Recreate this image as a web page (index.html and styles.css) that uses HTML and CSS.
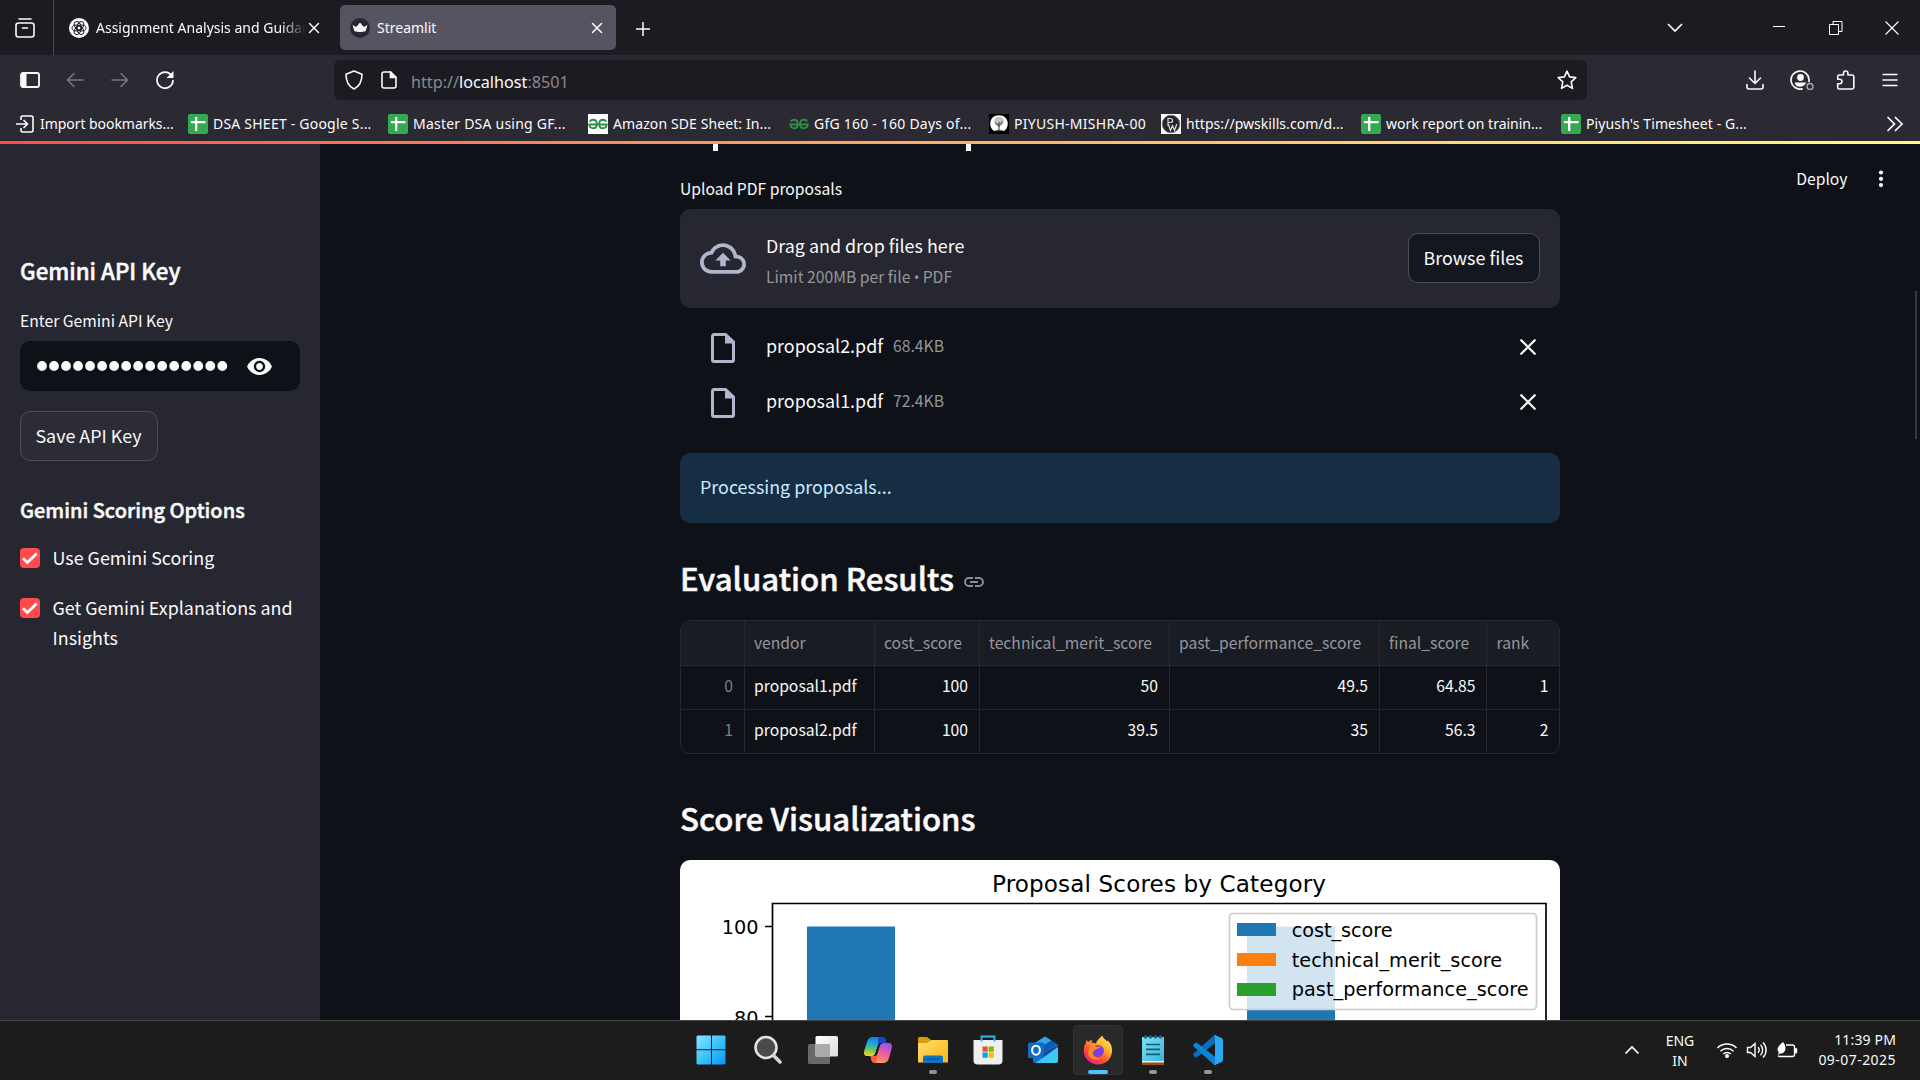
FILE: index.html
```html
<!DOCTYPE html>
<html lang="en">
<head>
<meta charset="utf-8">
<title>Streamlit</title>
<link rel="stylesheet" href="styles.css">
</head>
<body>
<svg width="0" height="0" class="defs">
  <defs>
    <symbol id="sheet" viewBox="0 0 20 20"><rect width="20" height="20" rx="2" fill="#34a853"/><path d="M8.2 3v14M3 8.2h14.500" stroke="#fff" stroke-width="2.300"/></symbol>
    <symbol id="gfg" viewBox="0 0 20 20"><path d="M2 7.800C2.400 6.300 3.600 5.700 5 5.700c2.400 0 3.800 1.700 3.800 4.200S7.400 14.300 5.200 14.300C3.200 14.300 1.600 13 1.300 10.500H18.700C18.400 13 16.800 14.300 14.800 14.300c-2.200 0-3.600-1.900-3.600-4.400s1.400-4.200 3.800-4.200c1.400 0 2.600.6 3 2.100" fill="none" stroke="#2f8d46" stroke-width="1.900"/></symbol>
    <symbol id="x" viewBox="0 0 12 12"><path d="M1.500 1.500l9 9M10.500 1.500l-9 9" fill="none" stroke="currentColor" stroke-width="1.500" stroke-linecap="round"/></symbol>
    <symbol id="file" viewBox="0 0 24 30"><path d="M14.500 1.500H3A1.500 1.500 0 0 0 1.500 3v24A1.500 1.500 0 0 0 3 28.500h18a1.500 1.500 0 0 0 1.500-1.500V9z" fill="none" stroke="#b2b5cb" stroke-width="3"/><path d="M14 1v9.500h9V9.300L15.300 1z" fill="#b2b5cb"/></symbol>
    <symbol id="check" viewBox="0 0 20 20"><rect width="20" height="20" rx="4" fill="#ff4b4b"/><path d="M3 10.200l4.300 4.300L16.800 5.500" fill="none" stroke="#fafafa" stroke-width="2.700"/></symbol>
  </defs>
</svg>

<header class="browser">
  <div class="tabs">
    <div class="view"><svg width="20" height="20" viewBox="0 0 20 20" fill="none" stroke="#fbfbfe" stroke-width="1.600"><path d="M4 1h12" stroke-linecap="round"/><rect x="1" y="5" width="18" height="14" rx="2.500"/><path d="M7.500 10h5" stroke-linecap="round"/></svg></div>
    <div class="tab">
      <svg width="20" height="20" viewBox="0 0 20 20"><circle cx="10" cy="10" r="10" fill="#fff"/><g fill="none" stroke="#222" stroke-width="1"><ellipse cx="10" cy="7.500" rx="3" ry="4.500" transform="rotate(30 10 10)"/><ellipse cx="10" cy="7.500" rx="3" ry="4.500" transform="rotate(90 10 10)"/><ellipse cx="10" cy="7.500" rx="3" ry="4.500" transform="rotate(150 10 10)"/><ellipse cx="10" cy="7.500" rx="3" ry="4.500" transform="rotate(210 10 10)"/><ellipse cx="10" cy="7.500" rx="3" ry="4.500" transform="rotate(270 10 10)"/><ellipse cx="10" cy="7.500" rx="3" ry="4.500" transform="rotate(330 10 10)"/></g></svg>
      <span class="tab-title fade">Assignment Analysis and Guidance</span>
      <svg class="tab-x" width="12" height="12"><use href="#x"/></svg>
    </div>
    <div class="tab active">
      <svg width="20" height="20" viewBox="0 0 20 20"><circle cx="10" cy="10" r="10" fill="#262730"/><path d="M2.500 7l3.700 2L10 4.500 13.800 9l3.700-2-2 6.200c-3 1.100-8 1.100-11 0z" fill="#f4f4f4"/></svg>
      <span class="tab-title">Streamlit</span>
      <svg class="tab-x" width="12" height="12"><use href="#x"/></svg>
    </div>
    <svg class="plus" width="16" height="16" viewBox="0 0 16 16" stroke="#fbfbfe" stroke-width="1.500"><path d="M8 1v14M1 8h14"/></svg>
    <div class="window-buttons">
      <svg width="16" height="16" viewBox="0 0 16 16" fill="none" stroke="#fbfbfe" stroke-width="1.600"><path d="M1 4l7 7 7-7"/></svg>
      <svg class="minimise" width="14" height="14" viewBox="0 0 14 14" stroke="#fff"><path d="M1 5.500h12"/></svg>
      <svg class="restore" width="14" height="14" viewBox="0 0 14 14" fill="none" stroke="#fff"><path d="M.5 3.500h9v10h-9zM4 3.500v-3h9v10H9.500"/></svg>
      <svg class="close" width="14" height="14" viewBox="0 0 14 14" stroke="#fff" stroke-width="1.100"><path d="M.5.5l13 13M13.500.5l-13 13"/></svg>
    </div>
  </div>

  <div class="toolbar">
    <div class="nav">
      <svg width="20" height="16" viewBox="0 0 20 16"><rect x="1" y="1" width="18" height="14" rx="2" fill="none" stroke="#fbfbfe" stroke-width="1.800"/><path d="M2 2h4.500v12H2z" fill="#fbfbfe"/></svg>
      <svg width="18" height="18" viewBox="0 0 18 18" fill="none" stroke="#77767e" stroke-width="1.600" stroke-linecap="round" stroke-linejoin="round"><path d="M17 9H1.500M8 2.500L1.500 9 8 15.500"/></svg>
      <svg width="18" height="18" viewBox="0 0 18 18" fill="none" stroke="#77767e" stroke-width="1.600" stroke-linecap="round" stroke-linejoin="round"><path d="M1 9h15.500M10 2.500L16.500 9 10 15.500"/></svg>
      <svg width="20" height="20" viewBox="0 0 20 20"><path d="M16.500 5.500A8 8 0 1 0 18 10.500" fill="none" stroke="#fbfbfe" stroke-width="1.700" stroke-linecap="round"/><path d="M18.500 1v7h-7z" fill="#fbfbfe"/></svg>
    </div>
    <div class="url">
      <svg width="18" height="20" viewBox="0 0 18 20" fill="none" stroke="#fbfbfe" stroke-width="1.600" stroke-linejoin="round"><path d="M9 1l8 3.200c0 7-2 11.800-8 14.800C3 16 1 11.200 1 4.200z"/></svg>
      <svg width="16" height="18" viewBox="0 0 16 18" fill="none" stroke="#fbfbfe" stroke-width="1.600"><path d="M9.500 1H3a2 2 0 0 0-2 2v12a2 2 0 0 0 2 2h10a2 2 0 0 0 2-2V6.500z"/><path d="M9.500 1v5.500H15z" fill="#fbfbfe"/></svg>
      <span class="address">http://<b>localhost</b>:8501</span>
      <svg width="20" height="20" viewBox="0 0 20 20" fill="none" stroke="#fbfbfe" stroke-width="1.600" stroke-linejoin="round"><path d="M10 1.200l2.600 5.700 6.200.7-4.600 4.200 1.300 6.600L10 15.200l-5.500 3.200 1.300-6.600L1.200 7.600l6.200-.7z"/></svg>
    </div>
    <div class="tools">
      <svg width="18" height="20" viewBox="0 0 18 20" fill="none" stroke="#fbfbfe" stroke-width="1.600" stroke-linecap="round" stroke-linejoin="round"><path d="M9 1v12M3.500 8L9 13.500 14.500 8M1 14.500V17a2 2 0 0 0 2 2h12a2 2 0 0 0 2-2v-2.500"/></svg>
      <svg width="24" height="20" viewBox="0 0 24 20"><path d="M12 18.800A9 9 0 1 1 19 9.500v2" fill="none" stroke="#fbfbfe" stroke-width="1.700" stroke-linecap="round"/><circle cx="10.500" cy="7.500" r="3.400" fill="#fbfbfe"/><path d="M4.500 12.500h12l-2.500 3q-4 2.500-8 0z" fill="#fbfbfe"/><circle cx="20" cy="16.500" r="3" fill="none" stroke="#aaa9b0" stroke-width="1.400"/></svg>
      <svg width="20" height="20" viewBox="0 0 20 20" fill="none" stroke="#fbfbfe" stroke-width="1.600" stroke-linejoin="round"><path d="M7.500 5V3.200a2.200 2.200 0 0 1 4.400 0V5H16a1.800 1.800 0 0 1 1.800 1.800V17.200A1.800 1.800 0 0 1 16 19H3.300a1.600 1.600 0 0 1-1.600-1.600v-3.600h2a2.200 2.200 0 0 0 0-4.500h-2V6.600A1.600 1.600 0 0 1 3.300 5z"/></svg>
      <svg width="16" height="14" viewBox="0 0 16 14" stroke="#fbfbfe" stroke-width="1.400"><path d="M.5 1.500h15M.5 7h15M.5 12.500h15"/></svg>
    </div>
  </div>

  <div class="bookmarks">
    <div class="bm w1"><svg width="20" height="20" viewBox="0 0 20 20" fill="none" stroke="#fbfbfe" stroke-width="1.600"><path d="M6 6V3.500A1.500 1.500 0 0 1 7.500 2h9A1.500 1.500 0 0 1 18 3.500v13a1.500 1.500 0 0 1-1.500 1.500h-9A1.500 1.500 0 0 1 6 16.500V14M1 10h11.500M8.500 6l4 4-4 4"/></svg>Import bookmarks...</div>
    <div class="bm w2"><svg width="20" height="20"><use href="#sheet"/></svg>DSA SHEET - Google S...</div>
    <div class="bm w3"><svg width="20" height="20"><use href="#sheet"/></svg>Master DSA using GF...</div>
    <div class="bm w4"><svg class="white" width="20" height="20"><use href="#gfg"/></svg>Amazon SDE Sheet: In...</div>
    <div class="bm w5"><svg width="20" height="20"><use href="#gfg"/></svg>GfG 160 - 160 Days of...</div>
    <div class="bm w6"><svg width="20" height="20" viewBox="0 0 20 20"><path d="M0 0h20v20H0z"/><path d="M10 1.300c5 0 8.800 3.500 8.800 8.200 0 4-2.300 6.500-3.800 7.500-2.500-1-7.500-1-10 0-1.500-1-3.800-3.500-3.800-7.500C1.200 4.800 5 1.300 10 1.300z" fill="#fff"/><circle cx="10" cy="7.500" r="4.800" fill="#aaa" opacity=".7"/><path d="M10 17.500V8M10 12.500L6.500 8.500M10 11.500l3.500-4M8 17h4" stroke="#333" stroke-width="1"/></svg>PIYUSH-MISHRA-00</div>
    <div class="bm w7"><svg width="20" height="20" viewBox="0 0 20 20"><path d="M0 0h20v20H0z" fill="#fff"/><circle cx="10" cy="10" r="8.800" fill="#23272b" stroke="#777" stroke-width="1"/><path d="M7 12V4.500h2.500a2 2 0 0 1 0 4H7M7.500 10.500l2 6 2-5 2 5 2.300-6.500" fill="none" stroke="#ddd" stroke-width="1.200"/></svg>https://pwskills.com/d...</div>
    <div class="bm w8"><svg width="20" height="20"><use href="#sheet"/></svg>work report on trainin...</div>
    <div class="bm w9"><svg width="20" height="20"><use href="#sheet"/></svg>Piyush's Timesheet - G...</div>
    <svg class="more" width="18" height="16" viewBox="0 0 18 16" fill="none" stroke="#fbfbfe" stroke-width="1.700"><path d="M1.500 1l7 7-7 7M9 1l7 7-7 7"/></svg>
  </div>
</header>
<div class="rainbow"></div>

<div class="app">
  <aside class="side">
    <h2>Gemini API Key</h2>
    <label class="small">Enter Gemini API Key</label>
    <div class="secret">
      <svg width="196" height="12" viewBox="0 0 196 12"><path d="M6 6h181" stroke="#fafafa" stroke-width="9.800" stroke-linecap="round" stroke-dasharray="0 12.020"/></svg>
      <svg width="25" height="17" viewBox="1 4.500 22 15" fill="#fafafa"><path d="M12 4.500C7 4.500 2.730 7.610 1 12c1.730 4.390 6 7.500 11 7.500s9.270-3.110 11-7.500c-1.730-4.390-6-7.500-11-7.500zM12 17c-2.760 0-5-2.240-5-5s2.240-5 5-5 5 2.240 5 5-2.240 5-5 5zm0-8c-1.660 0-3 1.340-3 3s1.340 3 3 3 3-1.340 3-3-1.340-3-3-3z"/></svg>
    </div>
    <button class="btn save">Save API Key</button>
    <h3>Gemini Scoring Options</h3>
    <div class="option"><svg width="20" height="20"><use href="#check"/></svg><span>Use Gemini Scoring</span></div>
    <div class="option"><svg width="20" height="20"><use href="#check"/></svg><span>Get Gemini Explanations and Insights</span></div>
  </aside>

  <main class="main">
    <section class="column">
      <div class="title-tail"><i></i><i></i></div>
      <label class="small upload-label">Upload PDF proposals</label>
      <div class="dropzone">
        <svg width="46" height="31" viewBox="0 4 24 16" fill="#b2b5cb"><path d="M19.350 10.040C18.670 6.590 15.640 4 12 4 9.110 4 6.600 5.640 5.350 8.040 2.340 8.360 0 10.910 0 14c0 3.310 2.690 6 6 6h13c2.760 0 5-2.240 5-5 0-2.640-2.050-4.780-4.650-4.960zM19 18H6c-2.210 0-4-1.790-4-4 0-2.050 1.530-3.760 3.560-3.970l1.070-.11.5-.95C8.080 7.140 9.940 6 12 6c2.620 0 4.880 1.860 5.390 4.430l.3 1.500 1.530.11c1.560.1 2.780 1.410 2.780 2.960 0 1.650-1.350 3-3 3zM8 13h2.550v3h2.900v-3H16l-4-4z"/></svg>
        <div class="drop-text"><span>Drag and drop files here</span><span class="small muted">Limit 200MB per file <b>•</b> PDF</span></div>
        <button class="btn browse">Browse files</button>
      </div>
      <div class="files">
        <div class="file"><svg width="24" height="30"><use href="#file"/></svg><span class="name">proposal2.pdf</span><span class="small muted">68.4KB</span><svg class="remove" width="18" height="18"><use href="#x"/></svg></div>
        <div class="file"><svg width="24" height="30"><use href="#file"/></svg><span class="name">proposal1.pdf</span><span class="small muted">72.4KB</span><svg class="remove" width="18" height="18"><use href="#x"/></svg></div>
      </div>
      <div class="info">Processing proposals...</div>
      <h1>Evaluation Results <svg width="20" height="10" viewBox="0 0 20 10" fill="none" stroke="#8b8d92" stroke-width="1.900"><path d="M9 1H5a4 4 0 0 0 0 8h4M11 1h4a4 4 0 0 1 0 8h-4M6 5h8"/></svg></h1>
      <div class="grid">
        <div class="row head"><span></span><span>vendor</span><span>cost_score</span><span>technical_merit_score</span><span>past_performance_score</span><span>final_score</span><span>rank</span></div>
        <div class="row"><span>0</span><span>proposal1.pdf</span><span>100</span><span>50</span><span>49.5</span><span>64.85</span><span>1</span></div>
        <div class="row"><span>1</span><span>proposal2.pdf</span><span>100</span><span>39.5</span><span>35</span><span>56.3</span><span>2</span></div>
      </div>
      <h1 class="second">Score Visualizations</h1>
      <svg class="chart" width="880" height="660" viewBox="0 0 880 660">
        <rect width="880" height="660" fill="#fff"/>
        <path d="M127 66.500h88V600h-88zM567 66.500h88V600h-88z" fill="#1f77b4"/>
        <path d="M92.500 600V43.500h773.500V600M85 66.500h7.500M85 156.500h7.500" fill="none" stroke="#000" stroke-width="1.700"/>
        <text class="title" x="479" y="32" text-anchor="middle" textLength="334">Proposal Scores by Category</text>
        <text x="78.500" y="74" text-anchor="end">100</text>
        <text x="78.500" y="164.500" text-anchor="end">80</text>
        <rect x="549.500" y="53.500" width="307" height="96" rx="4" fill="#fff" fill-opacity=".8" stroke="#ccc" stroke-width="1.700"/>
        <path d="M557 63h39v13h-39z" fill="#1f77b4"/><path d="M557 93h39v13h-39z" fill="#ff7f0e"/><path d="M557 123h39v13h-39z" fill="#2ca02c"/>
        <text x="611.700" y="76.500" textLength="101">cost_score</text>
        <text x="611.700" y="106.500" textLength="210.500">technical_merit_score</text>
        <text x="611.700" y="136" textLength="237">past_performance_score</text>
      </svg>
    </section>
    <div class="deploy">Deploy<svg width="6" height="18" viewBox="0 0 6 18" fill="#fafafa"><circle cx="3" cy="2.500" r="2.100"/><circle cx="3" cy="8.800" r="2.100"/><circle cx="3" cy="15.100" r="2.100"/></svg></div>
    <div class="scrollbar"></div>
  </main>
</div>

<footer class="taskbar">
  <div class="icons">
    <div class="slot start"><svg width="30" height="30" viewBox="0 0 30 30"><defs><linearGradient id="win" x2="1" y2="1"><stop stop-color="#8ae4ff"/><stop offset=".5" stop-color="#3cc4fb"/><stop offset="1" stop-color="#0a93f6"/></linearGradient></defs><path d="M1.500.5H15v13.800H.5V1.500zM16 .5h12.500l1 1v12.800H16zM.5 15.300H15v14.200H1.500l-1-1zM16 15.300h13.500v13.200l-1 1H16z" fill="url(#win)"/></svg></div>
    <div class="slot"><svg width="30" height="30" viewBox="0 0 30 30"><circle cx="13" cy="12.500" r="10.500" fill="#4a4a4a" stroke="#e3e3e3" stroke-width="2.600"/><path d="M20.500 20.500l6.500 6.500" stroke="#d5d5d5" stroke-width="3.600" stroke-linecap="round"/></svg></div>
    <div class="slot"><svg width="30" height="30" viewBox="0 0 30 30"><defs><linearGradient id="tv" x2="1" y2="1"><stop stop-color="#fff"/><stop offset="1" stop-color="#dcdcdc"/></linearGradient></defs><rect y="9" width="22" height="20" rx="1.500" fill="#696969"/><rect x="7.500" y="1" width="22.500" height="20.500" rx="1.500" fill="url(#tv)"/><path d="M7.500 9H22v12.500H8.500l-1-1z" fill="#aaa"/></svg></div>
    <div class="slot"><svg width="30" height="30" viewBox="0 0 30 30"><defs><linearGradient id="cpa" x1=".5" x2=".3" y2="1"><stop stop-color="#1b73e8"/><stop offset=".35" stop-color="#16a7dc"/><stop offset=".65" stop-color="#5ec46b"/><stop offset="1" stop-color="#f5cf22"/></linearGradient><linearGradient id="cpb" x1=".7" x2=".3" y2="1"><stop stop-color="#9b50e8"/><stop offset=".5" stop-color="#ef5f9b"/><stop offset="1" stop-color="#ff9d54"/></linearGradient></defs><path d="M6.500 3C7.500 2.200 8.500 2 10 2h9c2 0 3 1.500 3.500 3l.8 3H18c-2 0-2.800 1-3.300 2.800l-2.200 7C12 19.800 10.800 21 9 21H4.500C1.500 21 .5 19 1.200 16L4 7c.6-2 1.200-3.200 2.500-4z" fill="url(#cpa)"/><path d="M15.500 2H19c2 0 3 1.500 3.500 3l.8 3H18c-1.500 0-2.500.7-3 2z" fill="#1745cf"/><path d="M23.500 27c-1 .8-2 1-3.500 1h-8c-2 0-3-1.500-3.500-3L7.500 21H11c2 0 3-1.200 3.500-3l2.200-7C17.300 9 18.500 8 20.500 8h5c3 0 4 2 3.300 5L26 23c-.6 2-1.200 3.200-2.500 4z" fill="url(#cpb)"/><path d="M7.500 21H11c1.800 0 2.800-1 3.400-2.600L13 28h-1c-2 0-3-1.500-3.500-3z" fill="#f2603d"/><path d="M15 10.500c.5-1.500 1.200-2.500 3-2.500h1.500c-1.500.5-2.300 1.400-2.800 3L14 19.500c-.5 1-1.300 1.500-3 1.500.8-.7 1.200-1.500 1.500-2.800z" fill="#1c1c1c"/></svg></div>
    <div class="slot"><svg width="30" height="30" viewBox="0 0 30 30"><defs><linearGradient id="fo" x2="1" y2="1"><stop stop-color="#ffdc70"/><stop offset="1" stop-color="#fbb80d"/></linearGradient></defs><path d="M0 3.500A1.500 1.500 0 0 1 1.500 2H9l4 3-3 4H0z" fill="#dc9a0a"/><path d="M0 8h8.500c2 0 3-3 5-3H29a1 1 0 0 1 1 1v21.500H0z" fill="url(#fo)"/><path d="M5 28v-5.500a2 2 0 0 1 2-2h16a2 2 0 0 1 2 2V28z" fill="#1173c5"/><path d="M8.500 24h13" stroke="#0b4f94" stroke-width="1.200"/></svg><i></i></div>
    <div class="slot"><svg width="30" height="30" viewBox="0 0 30 30"><path d="M.5 5h29v20.500c0 2.500-1.500 4-4 4h-21c-2.500 0-4-1.500-4-4z" fill="#efefef"/><path d="M8.500 6.500v-5h13v5" fill="none" stroke="#2bb5ee" stroke-width="1.900"/><path d="M9.500 11.500h5.200v5.200H9.500z" fill="#f25022"/><path d="M15.600 11.500h5.200v5.200h-5.200z" fill="#7fba00"/><path d="M9.500 17.500h5.200v5.200H9.500z" fill="#00a4ef"/><path d="M15.600 17.500h5.200v5.200h-5.200z" fill="#ffb900"/></svg></div>
    <div class="slot"><svg width="30" height="30" viewBox="0 0 30 30"><path d="M5 10L17 1.500 30 10v15.500a2.500 2.500 0 0 1-2.500 2.500H7.500A2.500 2.500 0 0 1 5 25.500z" fill="#1274d0"/><path d="M5 9L17 1.500l6.500 4L9 14z" fill="#31a5ea"/><path d="M23.500 5.500L29 9 13 19V12z" fill="#0e59b2"/><path d="M30 10v6L17 24l-4-5z" fill="#124a9d"/><path d="M30 12v13.500a2.500 2.500 0 0 1-2.500 2.500H7.500z" fill="#3cc8f2"/><rect y="7.500" width="16" height="15.500" rx="1.500" fill="#0f6cca"/><ellipse cx="8" cy="15.200" rx="3.900" ry="4.500" fill="none" stroke="#fff" stroke-width="2.100"/></svg></div>
    <div class="slot current"><svg width="30" height="30" viewBox="0 0 30 30"><defs><linearGradient id="ff" x1=".9" x2=".2" y2="1"><stop stop-color="#fff04d"/><stop offset=".35" stop-color="#ffb62d"/><stop offset=".65" stop-color="#ff5634"/><stop offset="1" stop-color="#f01786"/></linearGradient></defs><path d="M19 .5c1 2.500 3.500 4 5 6l.5-1.200C28 8.500 29.500 12 29 17c-.8 7.500-6.500 12.500-14 12.500S1 24 .8 16C.7 12.500 1.600 9.500 3 7.500l.5-2.500 2 2C7 5.500 8 5.300 9 5l-.5 3c1.500-.5 3-.2 4.500.8C13.500 5 16.500 4 19 .5z" fill="url(#ff)"/><circle cx="15" cy="16" r="6" fill="#7a3fe0"/><path d="M7 11c3-1 5-.5 7 1l4-1c-2 3-5 3-7 4.500C8 18 10 24 18 23c-6 3.500-13 .5-13-5.500z" fill="#ff8a24"/></svg><i></i></div>
    <div class="slot"><svg width="30" height="30" viewBox="0 0 30 30"><defs><linearGradient id="np" y2="1" x2="1"><stop stop-color="#7fe0f5"/><stop offset="1" stop-color="#3fb2d4"/></linearGradient></defs><path d="M4 27h22v3H4z" fill="#9a4f15"/><path d="M4 25h22v2.500H4z" fill="#eee"/><path d="M4 2h22v24H4z" fill="url(#np)"/><path d="M8 9.500h14M8 14.300h14M8 19.300h14" stroke="#0c5d80" stroke-width="1.700"/><g fill="#0f6d94"><circle cx="7.500" cy="2" r="1.700"/><circle cx="12.500" cy="2" r="1.700"/><circle cx="17.500" cy="2" r="1.700"/><circle cx="22.500" cy="2" r="1.700"/></g></svg><i></i></div>
    <div class="slot"><svg width="30" height="30" viewBox="0 0 30 30"><path d="M22 8.200L4 22.300c-.5.400-1 .3-1.500 0L.6 20.500c-.6-.6-.6-1.300 0-1.900L20.500.8 23 0z" fill="#0b6db5"/><path d="M22 21.800L4 7.700c-.5-.4-1-.3-1.500 0L.6 9.500c-.6.600-.6 1.300 0 1.900L20.500 29.200 23 30z" fill="#0a85d3"/><path d="M22 0l6.500 3c1 .5 1.500 1.200 1.500 2.300v19.400c0 1.100-.5 1.800-1.500 2.300L22 30c-.8.200-1.300-.3-1.500-.8.700.5 1.500 0 1.500-1.200V2c0-1.200-.8-1.700-1.500-1.200.2-.5.700-1 1.500-.8z" fill="#2aa8f5"/></svg><i></i></div>
  </div>
  <div class="tray">
    <svg class="up" width="16" height="10" viewBox="0 0 16 10" fill="none" stroke="#fff" stroke-width="1.700"><path d="M1.500 8.500L8 2l6.500 6.500"/></svg>
    <div class="lang">ENG<br>IN</div>
    <svg class="wifi" width="22" height="18" viewBox="0 0 22 18" fill="none" stroke="#fff" stroke-width="1.500"><path d="M1.500 7a13.400 13.400 0 0 1 19 0M4.500 10.300a9.200 9.200 0 0 1 13 0M7.300 13a5.200 5.200 0 0 1 7.400 0"/><circle cx="11" cy="15" r="1.300" fill="#fff"/></svg>
    <svg class="sound" width="22" height="18" viewBox="0 0 22 18" fill="none" stroke="#fff" stroke-width="1.400"><path d="M1.500 6.500h3L9 2.500v13l-4.500-4h-3zM12 6.300a4 4 0 0 1 0 5.400M14.500 3.800a7.300 7.300 0 0 1 0 10.400M17 1.500a10.600 10.600 0 0 1 0 15"/></svg>
    <svg class="battery" width="22" height="18" viewBox="0 0 22 18" fill="none" stroke="#fff" stroke-width="1.400"><path d="M10 4h6.500A2 2 0 0 1 18.500 6v7.500a2 2 0 0 1-2 2H3.500a2 2 0 0 1-1.500-.8"/><path d="M19 8v3.500h1.500V8z" fill="#fff"/><path d="M7 1c2.500 3 3 6 2 8.500C8.200 12 6 12.500 4 12.500L2 14l.8-2.800C0 9 2 5 7 1z" fill="#fff" stroke="none"/></svg>
    <div class="clock">11:39 PM<br><span>09-07-2025</span></div>
  </div>
</footer>
</body>
</html>
```

FILE: styles.css
```css
* { box-sizing: border-box; }
body {
  margin: 0;
  width: 1920px;
  height: 1080px;
  overflow: hidden;
  display: flex;
  flex-direction: column;
  background: #0e1117;
  color: #fafafa;
  font-family: "Noto Sans CJK SC", "Noto Sans", sans-serif;
  font-size: 17.900px;
  line-height: 30px;
}
svg { display: block; flex: none; }
.defs { position: absolute; }

/* Browser chrome */
.browser {
  height: 141px;
  flex: none;
  background: #2b2a33;
  font-family: "Noto Sans", sans-serif;
  font-size: 14px;
  line-height: 20px;
  color: #fbfbfe;
  white-space: nowrap;
}
.tabs { height: 55px; background: #1c1b22; display: flex; align-items: center; }
.view { width: 54px; height: 55px; border-right: 1px solid #4b4a52; padding: 18px 0 0 15px; }
.tab { display: flex; align-items: center; height: 45px; width: 276px; margin-left: 5px; padding: 0 13px 0 10px; border-radius: 5px; }
.tab:not(.active) { padding-right: 15px; }
.tab.active { background: #555460; margin-left: 5px; }
.tab-title { flex: 1; margin: 0 2px 0 7px; overflow: hidden; }
.fade { -webkit-mask-image: linear-gradient(90deg, #000 88%, transparent); mask-image: linear-gradient(90deg, #000 88%, transparent); }
.plus { margin: 2px 0 0 19px; }
.window-buttons { margin-left: auto; display: flex; align-items: center; padding-right: 21px; }
.minimise { margin-left: 89px; }
.restore { margin-left: 43px; }
.close { margin-left: 42px; }

.toolbar { height: 50px; display: flex; align-items: center; }
.nav { width: 334px; padding-left: 20px; display: flex; align-items: center; gap: 27px; }
.nav svg:nth-child(2) { margin: 0 0 0 -1px; }
.nav svg:nth-child(4) { margin-left: -1px; }
.url { width: 1253px; height: 40px; border-radius: 6px; background: #1c1b22; display: flex; align-items: center; padding: 0 10px 0 11px; }
.url svg:nth-child(2) { margin-left: 18px; }
.address { flex: 1; margin: 3px 0 0 14px; font-size: 16.200px; color: #8a898f; }
.address b { font-weight: 400; color: #fbfbfe; }
.tools { flex: 1; display: flex; align-items: center; padding-left: 158.500px; }
.tools svg:nth-child(2) { margin-left: 26px; }
.tools svg:nth-child(3) { margin-left: 22.500px; }
.tools svg:nth-child(4) { margin-left: 26px; }

.bookmarks { height: 37px; display: flex; align-items: center; padding: 0 16px 0 15px; }
.bm { display: flex; align-items: center; gap: 5px; flex: none; }
.w1 { width: 173px; letter-spacing: -.05px; }
.w2, .w3, .w5 { width: 200px; letter-spacing: .22px; }
.w4 { width: 201px; letter-spacing: .1px; }
.w6 { width: 172px; letter-spacing: .27px; }
.w7 { width: 200px; letter-spacing: .05px; }
.w8 { width: 200px; }
.w9 { letter-spacing: .12px; }
.white { background: #fff; }
.more { margin-left: auto; }
.rainbow { height: 3px; flex: none; background: linear-gradient(90deg, #ff4b4b, #ffb163 50%, #fffd80); }

/* Application */
.app { height: 876px; flex: none; display: flex; overflow: hidden; }
.side { width: 320px; background: #262730; padding: 110px 20px 0; }
h1, h2, h3 { margin: 0; font-weight: 500; -webkit-text-stroke: .5px currentColor; }
h2 { font-size: 22.300px; line-height: 32px; }
h3 { font-size: 20px; line-height: 30px; margin-top: 34px; }
.small { font-size: 15.700px; line-height: 24px; }
.muted { color: #95969b; }
.side .small { display: block; margin-top: 23px; }
.secret { height: 50px; margin-top: 8px; border-radius: 10px; background: #0e1117; display: flex; align-items: center; justify-content: space-between; padding: 0 28px 0 16px; }
.btn { height: 50px; border: 1px solid #4c4d55; border-radius: 10px; padding: 0 1px 2px 0; color: #fafafa; font: inherit; line-height: 46px; display: block; }
.save { width: 138px; margin-top: 20px; background: #2b2c36; }
.option { display: flex; gap: 12.500px; margin-top: 20px; }
h3 + .option { margin-top: 17px; }
.option svg { margin-top: 6px; }
.option span { line-height: 30px; }

.main { width: 1600px; display: grid; grid-template-columns: 360px 880px 1fr; position: relative; }
.column { grid-column: 2; }
.title-tail { height: 7px; display: flex; padding-left: 32.500px; gap: 247.500px; }
.title-tail i { width: 5.500px; background: #fafafa; }
.upload-label { display: block; margin-top: 26px; }
.dropzone { height: 99px; margin-top: 8px; border-radius: 10px; background: #262730; display: flex; align-items: center; padding: 0 20px; }
.drop-text { flex: 1; margin: 4px 0 0 20px; display: flex; flex-direction: column; gap: 6px; }
.drop-text span { line-height: 26px; }
.drop-text b { font: 14px/20px "Noto Sans", sans-serif; }
.browse { width: 132px; margin-bottom: 1px; background: #131720; }
.files { padding: 12px 20px 0 31px; }
.file { height: 55px; display: flex; align-items: center; }
.file .name { margin: -6px 10px 0 31px; }
.file .small { margin-top: -3px; }
.remove { margin: -1px 3.500px 0 auto; }
.info { height: 70px; margin-top: 23px; border-radius: 10px; background: #172d43; color: #c7ebff; padding: 17px 20px; line-height: 32px; }
h1 { font-size: 31.200px; line-height: 42px; margin-top: 34px; display: flex; align-items: center; gap: 10px; }
h1 svg { margin-top: 8px; }
.grid { height: 134px; margin-top: 21px; border: 1px solid #26282d; border-radius: 10px; overflow: hidden; font-size: 15.700px; }
.row { display: grid; grid-template-columns: 63.500px 130px 105px 190px 210px 107.500px 72px; height: 44px; }
.row span { border-right: 1px solid #26282d; border-bottom: 1px solid #26282d; padding: 0 10.500px 0 9.500px; line-height: 40px; text-align: right; }
.row span:nth-child(2), .head span:nth-child(n) { text-align: left; }
.row span:first-child { color: #7c7e83; }
.row span:last-child { border-right: 0; }
.row:last-child span { border-bottom: 0; }
.head { height: 45px; background: #1a1c24; color: #95969b; }
.row:nth-child(2) { height: 43.500px; }
.head span:nth-child(n) { line-height: 44px; color: #95969b; }
h1.second { margin-top: 43px; }
.chart { margin-top: 21px; border-radius: 10px; font-family: "DejaVu Sans", sans-serif; font-size: 19.300px; }
.chart .title { font-size: 23.100px; }
.deploy { grid-column: 3; height: 30px; margin-top: 20px; display: flex; align-items: center; justify-content: flex-end; gap: 30px; padding-right: 36.500px; font-size: 15.700px; }
.scrollbar { position: absolute; right: 3px; top: 147px; width: 2px; height: 148px; background: #36383d; }

/* Taskbar */
.taskbar { height: 60px; flex: none; position: relative; display: flex; background: #1c1c1c; border-top: 1px solid #454545; font-family: "Noto Sans", sans-serif; font-size: 14px; line-height: 20px; }
.icons { display: flex; padding: 4px 0 0 686px; gap: 5px; }
.slot { width: 50px; height: 50px; padding: 10px 10px 0; border-radius: 5px; display: flex; flex-direction: column; align-items: center; }
.start { margin-right: 2px; }
.slot i { width: 8px; height: 4px; margin-top: 5px; border-radius: 2px; background: #969696; }
.current { background: #292929; box-shadow: inset 0 0 0 1px #333; }
.current i { width: 20px; background: #4cc2ff; }
.tray { margin-left: auto; display: flex; align-items: center; padding-right: 24px; height: 58px; }
.lang { width: 40px; margin: 1px 0 0 20px; text-align: center; }
.wifi { margin-left: 16px; }
.sound, .battery { margin-left: 8px; }
.clock { width: 86px; margin-left: 12px; text-align: right; white-space: nowrap; letter-spacing: .15px; }
.clock span { letter-spacing: .45px; }
```
